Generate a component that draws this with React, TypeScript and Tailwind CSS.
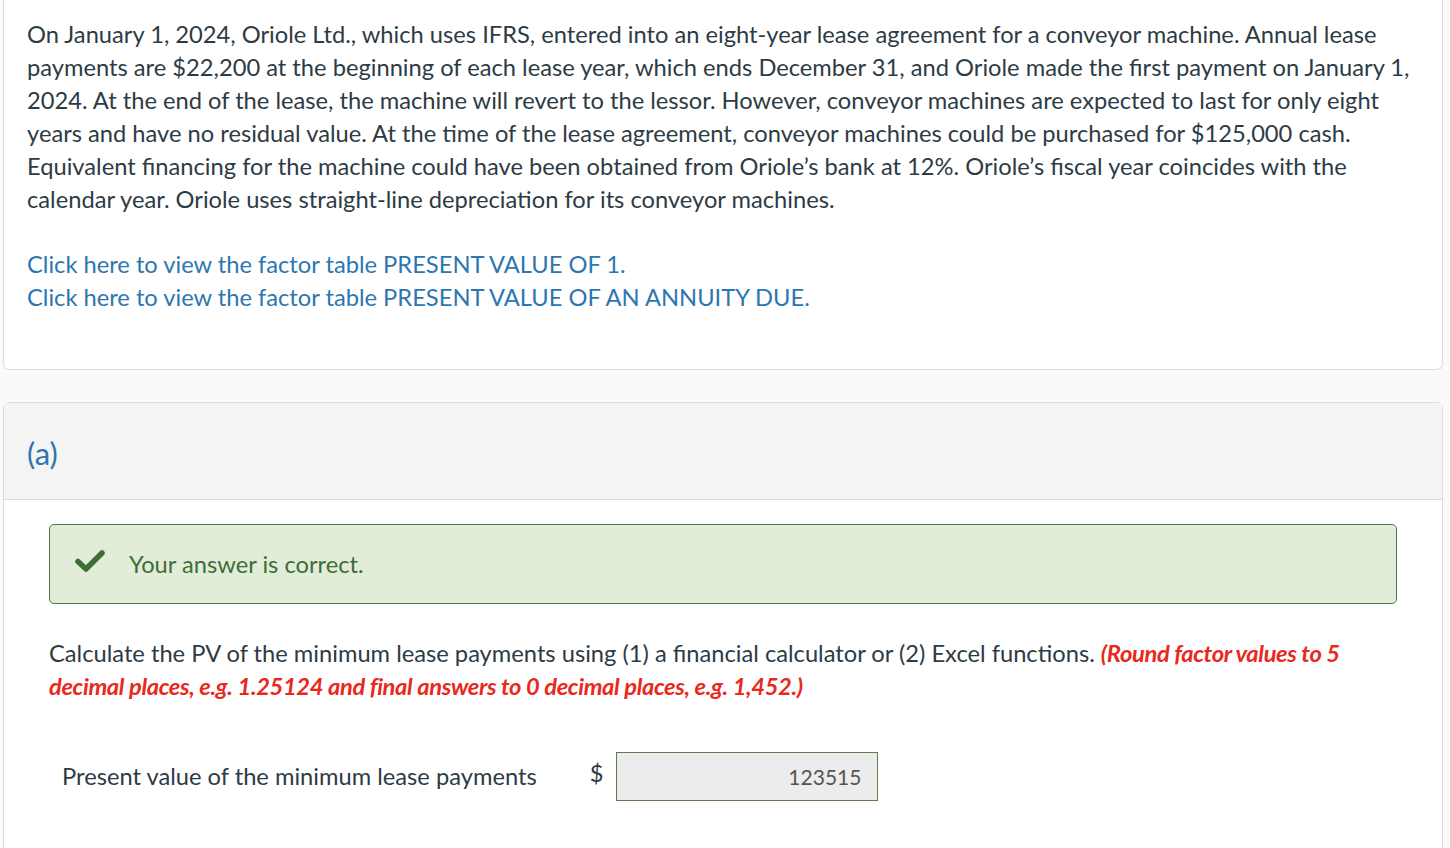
import React from "react";

export default function App() {
  return (
    <div
      className="min-h-[848px] w-[1450px] bg-[#fafafa] pl-[3px] text-[#2d3b45]"
      style={{ fontFamily: "Lato, 'Open Sans', sans-serif" }}
    >
      <div className="w-[1440px] rounded-b-[6px] border border-t-0 border-[#dcdcdc] bg-white px-[23px] pt-[18px] pb-[55px]">
        <p className="text-[23.7px] leading-[33px]">
          On January 1, 2024, Oriole Ltd., which uses IFRS, entered into an eight-year lease agreement for a conveyor machine. Annual lease payments are $22,200 at the beginning of each lease year, which ends December 31, and Oriole made the first payment on January 1, 2024. At the end of the lease, the machine will revert to the lessor. However, conveyor machines are expected to last for only eight years and have no residual value. At the time of the lease agreement, conveyor machines could be purchased for $125,000 cash. Equivalent financing for the machine could have been obtained from Oriole’s bank at 12%. Oriole’s fiscal year coincides with the calendar year. Oriole uses straight-line depreciation for its conveyor machines.
        </p>
        <div className="mt-[32px] flex flex-col text-[23.7px] leading-[33px] text-[#2d76b0]">
          <a>Click here to view the factor table PRESENT VALUE OF 1.</a>
          <a>Click here to view the factor table PRESENT VALUE OF AN ANNUITY DUE.</a>
        </div>
      </div>

      <div className="mt-[32px] w-[1440px] rounded-t-[6px] border border-b-0 border-[#dcdcdc] bg-white">
        <div className="flex h-[97px] items-center border-b border-[#dcdcdc] bg-[#f4f4f4] px-[23px]">
          <span className="mt-[4px] text-[31px] text-[#2d76b0]">(a)</span>
        </div>
        <div className="px-[45px] pt-[24px] pb-[48px]">
          <div className="flex h-[80px] items-center rounded-[5px] border border-[#4f7b45] bg-[#e1ecd9] pl-[25px]">
            <svg width="30" height="22" viewBox="0 0 30 22" className="mt-[-6px]">
              <path
                d="M3 11.5 L11 19 L27 3"
                fill="none"
                stroke="#3e6d37"
                strokeWidth="5.5"
                strokeLinecap="round"
                strokeLinejoin="round"
              />
            </svg>
            <span className="ml-[24px] mt-[2px] text-[23.7px] text-[#3e6d37]">Your answer is correct.</span>
          </div>

          <p className="mt-[33px] text-[23.7px] leading-[33px]">
            Calculate the PV of the minimum lease payments using (1) a financial calculator or (2) Excel functions.{" "}
            <span className="font-bold italic tracking-[-0.35px] text-[#e8291c]">
              (Round factor values to 5 decimal places, e.g. 1.25124 and final answers to 0 decimal places, e.g. 1,452.)
            </span>
          </p>

          <div className="mt-[49px] flex items-center">
            <span className="ml-[13px] text-[23.7px]">Present value of the minimum lease payments</span>
            <span className="ml-[53px] mt-[-6px] text-[23.7px]">$</span>
            <div className="ml-[13px] flex h-[49px] w-[262px] items-center justify-end border border-[#5b7d50] bg-[#ececec] pr-[16px] text-[21px] text-[#555]">
              123515
            </div>
          </div>
        </div>
      </div>
    </div>
  );
}
